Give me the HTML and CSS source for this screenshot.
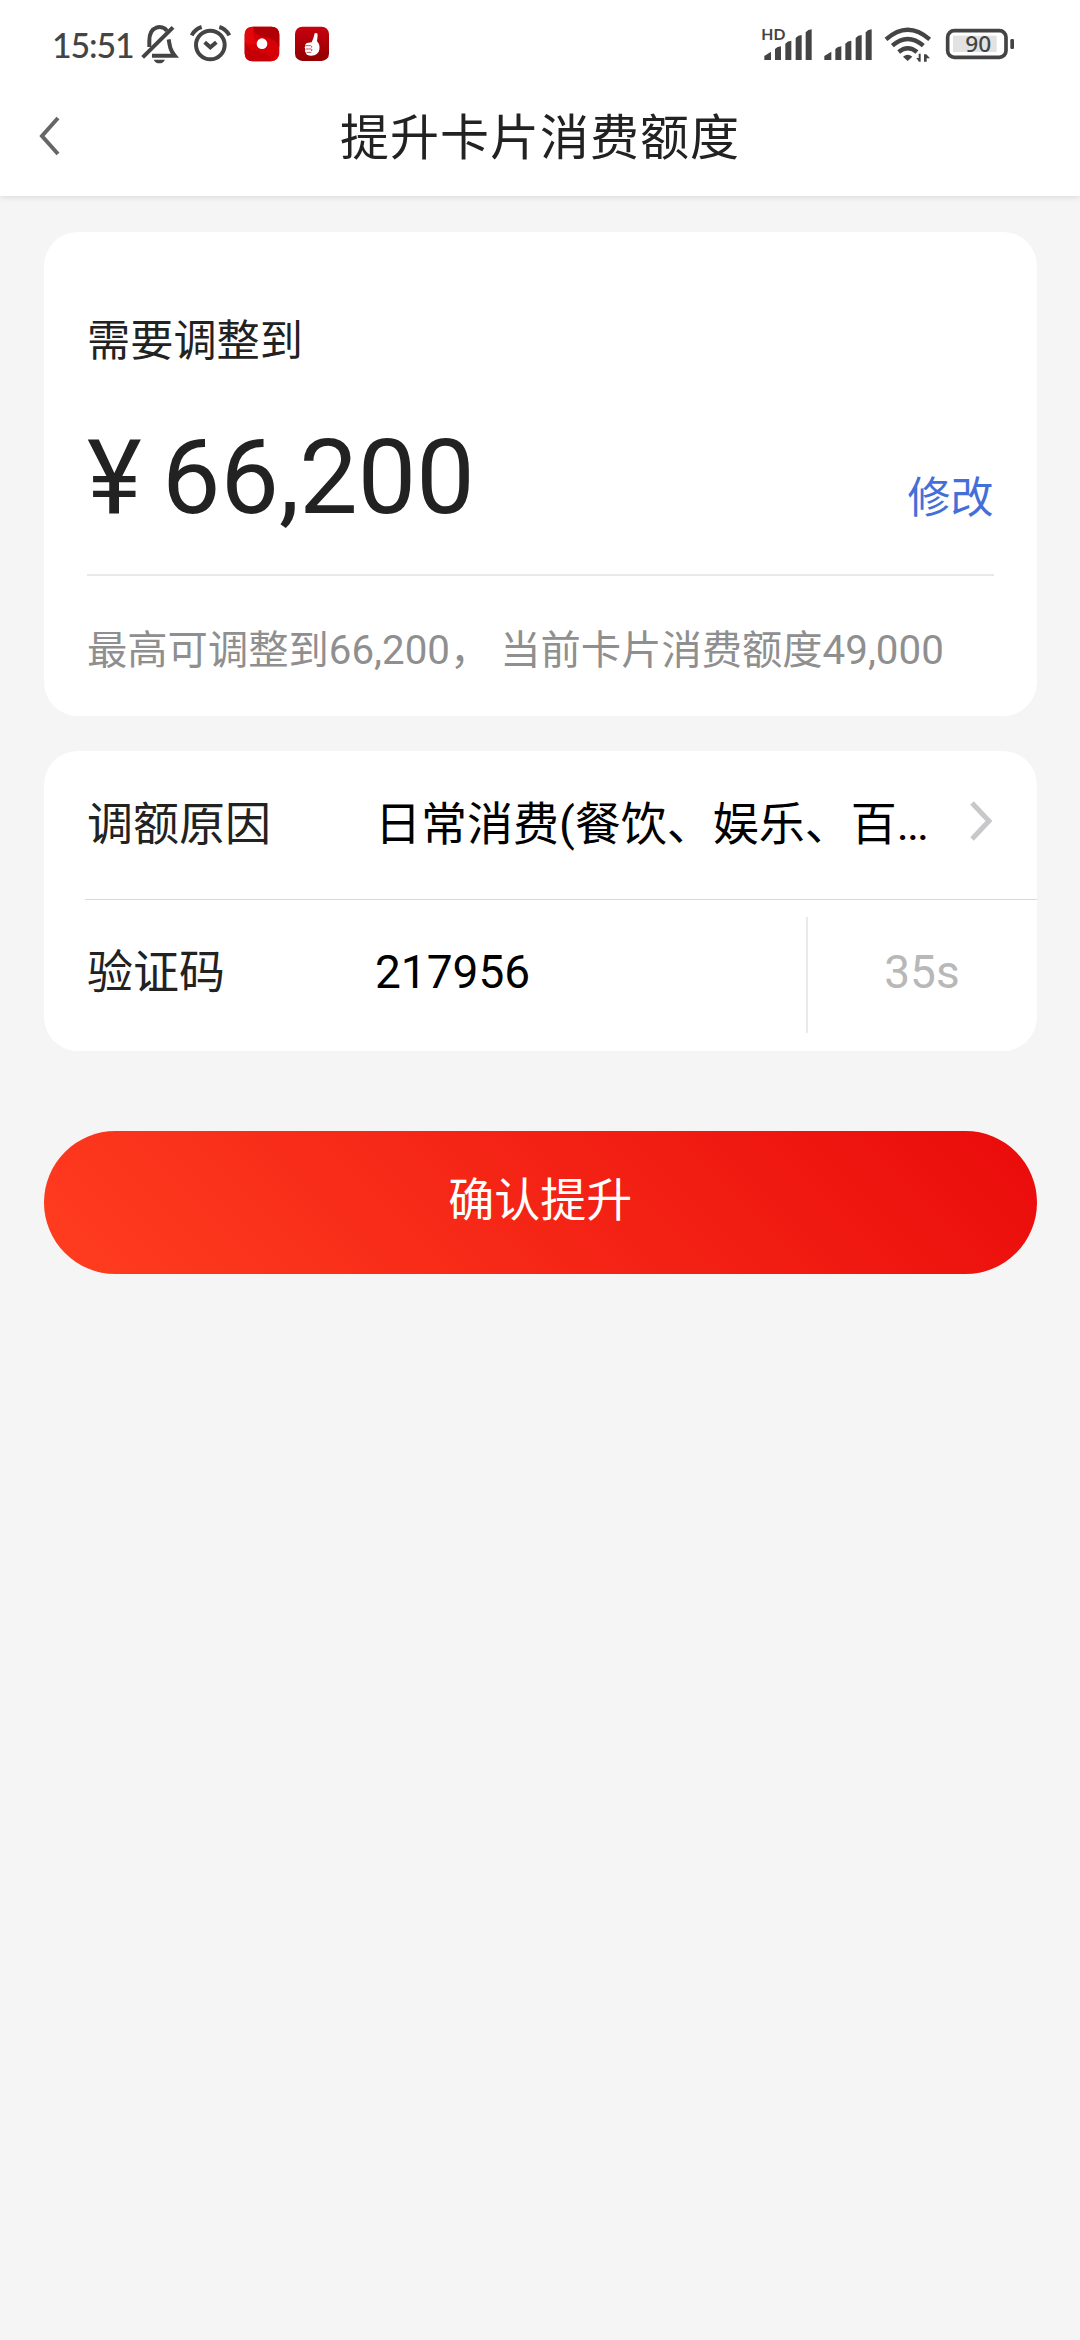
FILE: index.html
```html
<!DOCTYPE html>
<html lang="zh-CN">
<head>
<meta charset="utf-8">
<title>提升卡片消费额度</title>
<link rel="stylesheet" href="styles.css">
</head>
<body>
<header class="top">
  <div class="status">
    <div class="status-group">
      <span class="time">15:51</span>
      <svg width="45" height="70" viewBox="300 0 135 210" fill="none" stroke="#444" stroke-width="12">
        <path d="M328 111V92C328 45 367 44 381 62M386 88C390 112 392 123 404 137H336"/>
        <path d="M308 142L399 52"/>
        <path d="M341 149H375Q370 160 358 160Q346 160 341 149Z" fill="#444" stroke="none"/>
      </svg>
      <svg width="50" height="70" viewBox="435 0 150 210" fill="none" stroke="#444" stroke-width="12">
        <circle cx="511" cy="105" r="43"/>
        <path d="M494 97L511 112L529 97M455 76Q465 57 485 51M538 51Q558 57 568 76"/>
      </svg>
      <svg width="52" height="70" viewBox="585 0 156 210">
        <rect x="614" y="50" width="104" height="104" rx="24" fill="#d60007"/>
        <path d="M640 50H694Q718 50 718 74V112Q710 84 666 80Q638 72 640 50Z" fill="#b00006"/>
        <path d="M694 154H638Q614 154 614 130V92Q622 120 656 124Q690 132 694 154Z" fill="#c40006"/>
        <path d="M614 92V74Q614 50 638 50H640Q636 84 652 100Q624 112 614 92Z" fill="#e3060c"/>
        <circle cx="666" cy="101" r="16" fill="#fff"/>
      </svg>
      <svg width="48" height="70" viewBox="741 0 144 210">
        <defs><linearGradient id="like" x1="0" y1="0" x2="0" y2="1"><stop offset="0" stop-color="#c90010"/><stop offset="1" stop-color="#8f0000"/></linearGradient></defs>
        <rect x="765" y="50" width="102" height="103" rx="22" fill="url(#like)"/>
        <path d="M824 70Q833 66 833 76Q832 87 831 94Q841 104 838 119Q835 136 814 137Q799 137 798 129Q793 124 796 118Q792 112 796 107Q795 99 805 98L815 97Q821 85 824 70Z" fill="#fff"/>
        <path d="M797 107H812Q818 109 814 113M798 117H814Q818 119 814 123M800 127H814" fill="none" stroke="#a40006" stroke-width="2"/>
      </svg>
    </div>
    <div class="status-group">
      <svg width="62" height="70" viewBox="45 0 186 210" fill="#444">
        <text class="hd" x="64" y="90" textLength="72" lengthAdjust="spacingAndGlyphs">HD</text>
        <path d="M73 150V138L93 125V150ZM105 150V117Q112 109 123 109V150ZM136 150V101Q143 92 154 92V150ZM167 150V84Q174 75 185 75V150ZM197 150V67Q204 58 215 58V150Z"/>
      </svg>
      <svg width="60" height="70" viewBox="231 0 180 210" fill="#444">
        <path d="M253 150V138L274 125V150ZM286 150V117Q293 109 304 109V150ZM316 150V101Q323 92 334 92V150ZM347 150V84Q354 75 365 75V150ZM377 150V67Q384 58 395 58V150Z"/>
      </svg>
      <svg width="60" height="70" viewBox="411 0 180 210" fill="none" stroke="#444" stroke-width="13">
        <path d="M438 88Q503 30 569 88M457 107Q503 67 550 107M476 126Q503 103 531 126"/>
        <path d="M489 140Q503 128 517 140L503 153Z" fill="#444" stroke="none"/>
        <path d="M542 131V155H537L529 144H536V131ZM552 155V133H559L570 145H560V155Z" fill="#444" stroke="none"/>
      </svg>
      <svg width="83" height="70" viewBox="591 0 249 210">
        <rect x="623" y="62" width="175" height="80" rx="20" fill="#fff" stroke="#444" stroke-width="11"/>
        <rect x="639" y="77" width="131" height="49" fill="#e2e2e2"/>
        <rect x="811" y="87" width="11" height="30" rx="4" fill="#444"/>
        <text class="charge" x="676" y="127" textLength="78" lengthAdjust="spacingAndGlyphs">90</text>
      </svg>
    </div>
  </div>
  <div class="nav">
    <svg class="back" width="28" height="44" viewBox="0 0 28 44"><path d="M22 4L6 22L22 40" fill="none" stroke="#666" stroke-width="4"/></svg>
    <h1 class="title">提升卡片消费额度</h1>
  </div>
</header>
<main class="content">
  <section class="card amount-card">
    <p class="label">需要调整到</p>
    <div class="amount-row">
      <p class="amount"><span class="yen">¥</span>66,200</p>
      <a class="edit">修改</a>
    </div>
    <p class="hint">最高可调整到66,200， 当前卡片消费额度49,000</p>
  </section>
  <section class="card form">
    <div class="row">
      <span class="name">调额原因</span>
      <span class="value">日常消费(餐饮、娱乐、百<span class="dots">...</span></span>
      <svg class="more" width="28" height="44" viewBox="0 0 28 44"><path d="M4 4L21 22L4 40" fill="none" stroke="#c8c8cb" stroke-width="5"/></svg>
    </div>
    <div class="row code-row">
      <span class="name">验证码</span>
      <span class="value code">217956</span>
      <span class="timer">35s</span>
    </div>
  </section>
  <button class="submit">确认提升</button>
</main>
</body>
</html>
```
FILE: styles.css
```css
* { box-sizing: border-box; }
body {
  margin: 0;
  min-height: 2340px;
  background: #f5f5f5;
  color: #222;
  font-family: Roboto, "Noto Sans CJK SC", sans-serif;
}
p, h1 { margin: 0; font-weight: 400; }
svg { display: block; flex: none; }

.top {
  height: 196px;
  background: #fff;
  box-shadow: 0 1px 6px rgba(0, 0, 0, .12);
}
.status {
  display: flex;
  justify-content: space-between;
  height: 90px;
  padding: 10px 60px 0 40px;
}
.status-group { display: flex; }
.time {
  width: 100px;
  padding-left: 12px;
  font: 500 34px/69px Lato, sans-serif;
  letter-spacing: -1.2px;
  color: #444;
  white-space: nowrap;
}
.hd { font: 700 46px Lato, sans-serif; }
.charge { font: 500 66px "Noto Sans", sans-serif; fill: #444; }

.nav {
  display: grid;
  grid-template-columns: 80px 1fr 80px;
  align-items: center;
  height: 92px;
}
.back { margin: 0 0 4px 36px; }
.title {
  padding-top: 3px;
  font-size: 49px;
  line-height: 92px;
  letter-spacing: 1px;
  text-align: center;
}

.content { padding: 36px 43.5px 0 44px; }
.card { background: #fff; border-radius: 34px; }
.amount-card { height: 484px; padding: 78px 43px 0; }
.label { font-size: 43.2px; line-height: 64px; }
.amount-row {
  display: flex;
  justify-content: space-between;
  align-items: flex-end;
  height: 202px;
  border-bottom: 2px solid #e9e9e9;
}
.amount { font-size: 104px; line-height: 122px; padding-bottom: 35px; white-space: nowrap; }
.yen { display: inline-block; width: 75px; }
.edit { font-size: 43px; line-height: 64px; color: #456fd8; padding-bottom: 44px; }
.hint {
  padding-top: 45px;
  font-size: 40.3px;
  line-height: 60px;
  color: #8f8f8f;
  white-space: nowrap;
}

.form { height: 300px; margin-top: 35px; padding-left: 41px; }
.row { display: flex; align-items: center; height: 149px; padding-left: 2px; }
.row:first-child { border-bottom: 1px solid #d9d9d9; }
.name, .value { padding-bottom: 3px; font-size: 46px; line-height: 68px; }
.code-row .name, .code-row .value { padding-bottom: 6px; }
.name { width: 288px; }
.value { flex: 1; color: #000; white-space: nowrap; }
.dots { letter-spacing: -2px; }
.more { margin: 0 41px 8px 0; }
.timer {
  width: 231px;
  height: 116px;
  border-left: 2px solid #e9e9e9;
  font-size: 46px;
  line-height: 111px;
  color: #b8b8b8;
  text-align: center;
}

.submit {
  display: block;
  width: 100%;
  height: 143px;
  margin-top: 80px;
  padding: 0 0 14px;
  border: 0;
  border-radius: 72px;
  background: linear-gradient(45deg, #ff3d20, #ea0b0b);
  color: #fff;
  font: inherit;
  font-size: 46px;
}
```
